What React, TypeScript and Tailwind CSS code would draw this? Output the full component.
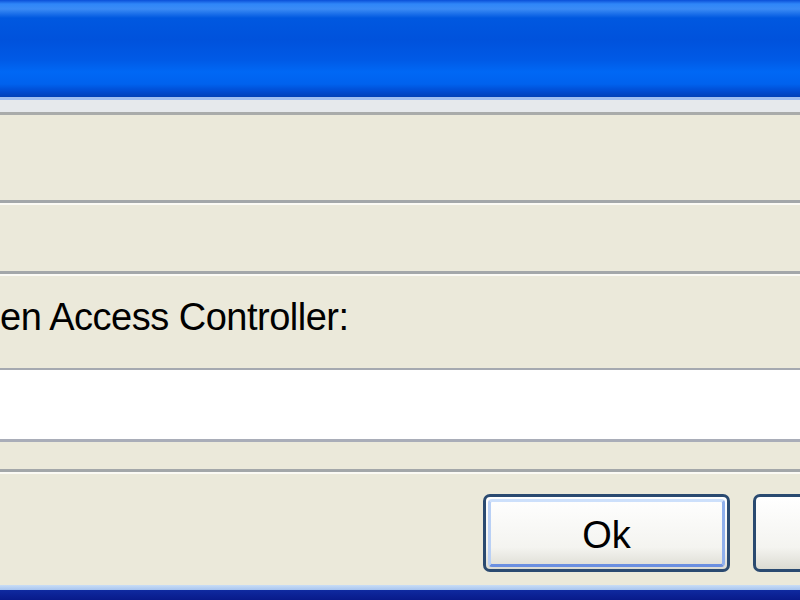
import React from "react";

function Etched() {
  return (
    <div className="flex flex-col">
      <div className="h-[3px] bg-[#a3a7a9]" />
      <div className="h-[2px] bg-[#fbfaf4]" />
    </div>
  );
}

export default function App() {
  return (
    <div className="w-[800px] h-[600px] overflow-hidden flex flex-col bg-[#ebe9da] font-['Liberation_Sans',Arial,sans-serif] text-black">
      {/* title bar */}
      <div className="h-[97px] bg-[linear-gradient(to_bottom,#0a4fd8_0px,#2f86f8_4px,#3b8bf5_9px,#0058e0_18px,#0052dc_40px,#005ae6_60px,#0068f5_72px,#0062ee_84px,#0049cf_92px,#003fb8_97px)]" />
      <div className="h-[3px] bg-[#9fbdf0]" />
      <div className="h-[12px] bg-[#e6e9ec]" />
      <div className="h-[3px] bg-[#a9abaa]" />

      <div className="h-[85px]" />
      <Etched />
      <div className="h-[66px]" />
      <Etched />

      <div className="h-[92px] flex items-start pt-[22px]">
        <span className="text-[38px] leading-none tracking-[-0.5px]">
          en Access Controller:
        </span>
      </div>

      {/* text field */}
      <div className="h-[2px] bg-[#a5a9b0]" />
      <div className="h-[69px] bg-white" />
      <div className="h-[3px] bg-[#a9adb8]" />
      <div className="h-[27px]" />
      <Etched />

      {/* buttons */}
      <div className="h-[111px] flex items-start pt-[20px] pl-[483px] gap-[23px]">
        <button className="w-[247px] h-[78px] shrink-0 rounded-[7px] border-[3px] border-[#2a4a70] bg-[linear-gradient(to_bottom,#ffffff,#f4f4f0_70%,#dcdbd2)] p-[2px]">
          <div className="w-full h-full rounded-[4px] border-[3px] border-t-[#cde0fb] border-l-[#b9d0f5] border-r-[#90b0ec] border-b-[#6b8fe0] flex items-center justify-center pt-[3px]">
            <span className="text-[38px] leading-none">Ok</span>
          </div>
        </button>
        <button className="w-[247px] h-[78px] shrink-0 rounded-[7px] border-[3px] border-[#2a4a70] bg-[linear-gradient(to_bottom,#ffffff,#f4f4f0_70%,#dcdbd2)]" />
      </div>

      <div className="h-[5px] bg-[linear-gradient(to_bottom,#c9ddf5,#a6c4f0)]" />
      <div className="flex-1 bg-[linear-gradient(to_bottom,#0f2aa0,#081a8a)]" />
    </div>
  );
}
